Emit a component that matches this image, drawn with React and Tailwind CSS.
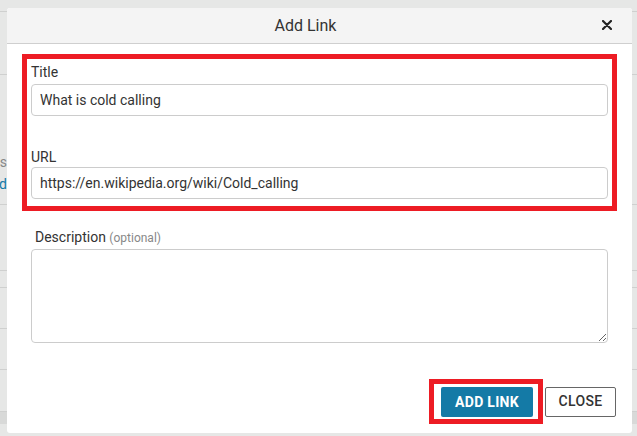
import { useState } from 'react';

const font = { fontFamily: 'Roboto, "Liberation Sans", sans-serif' };

// faint page that sits under the modal
function BackgroundPage() {
  const rows = [
    { h: 'h-[12px]' },
    { h: 'h-[63px]' },
    { h: 'h-[130px]', edge: true },
    { h: 'h-[66px]' },
    { h: 'h-[17px]' },
    { h: 'h-[41px]' },
    { h: 'h-[41px]' },
    { h: 'h-[42px]' },
  ];
  return (
    <div className="absolute inset-0 flex flex-col bg-[#e6e7e6]">
      {rows.map((r, i) => (
        <div key={i} className={`${r.h} border-b border-[#cfd0cf] flex items-start`}>
          {r.edge && (
            <div className="w-[7px] overflow-hidden flex flex-col items-end pt-[76px] text-[14px] leading-[22px]">
              <span className="text-[#888]">s</span>
              <span className="text-[#1479a6]">d</span>
            </div>
          )}
        </div>
      ))}
      <div className="h-[12px] bg-[#d8d9d8]" />
    </div>
  );
}

export default function App() {
  const [title, setTitle] = useState('What is cold calling');
  const [url, setUrl] = useState('https://en.wikipedia.org/wiki/Cold_calling');
  const [desc, setDesc] = useState('');

  return (
    <div className="relative w-[637px] h-[436px] overflow-hidden" style={font}>
      <BackgroundPage />

      {/* Modal */}
      <div className="absolute left-[7px] top-[8px] w-[625px] h-[425px] bg-white rounded-[3px] flex flex-col overflow-hidden">
        <header className="relative h-[36px] shrink-0 bg-[#f4f4f4] border-b border-[#cfcfcf] flex items-center justify-center pr-[28px]">
          <h1 className="text-[16px] text-[#333] leading-none">Add Link</h1>
          <button className="absolute right-[20px] top-[12px] w-[10px] h-[10px] flex items-center justify-center">
            <svg width="10" height="10" viewBox="0 0 10 10">
              <path d="M1 1 L9 9 M9 1 L1 9" stroke="#222" strokeWidth="2.2" strokeLinecap="round" />
            </svg>
          </button>
        </header>

        <div className="flex-1 flex flex-col px-[15px] pt-[10px] pb-[9px]">
          {/* highlighted fields */}
          <div className="border-[5px] border-[#ed1c24] px-[4px] pt-[3px] pb-[7px] flex flex-col">
            <label className="text-[14px] leading-[20px] text-[#333]">Title</label>
            <input
              value={title}
              onChange={e => setTitle(e.target.value)}
              className="mt-[2px] h-[32px] w-full border border-[#cccccc] rounded-[4px] px-2 text-[14px] text-[#333] outline-none"
            />
            <label className="mt-[31px] text-[14px] leading-[20px] text-[#333]">URL</label>
            <input
              value={url}
              onChange={e => setUrl(e.target.value)}
              className="h-[32px] w-full border border-[#cccccc] rounded-[4px] px-2 text-[14px] text-[#333] outline-none"
            />
          </div>

          <div className="px-[9px] pt-[16px] flex flex-col">
            <label className="pl-[4px] text-[14px] leading-[20px] text-[#333]">
              Description <span className="text-[12px] text-[#888]">(optional)</span>
            </label>
            <textarea
              value={desc}
              onChange={e => setDesc(e.target.value)}
              className="mt-[1px] h-[94px] w-full border border-[#cccccc] rounded-[4px] px-2 py-1 text-[14px] text-[#333] outline-none"
            />
          </div>

          <div className="mt-auto flex items-center justify-end gap-[2px] pr-[1px]">
            <div className="border-[5px] border-[#ed1c24] pl-[7px] pr-[5px] pt-[3px] pb-[2px]">
              <button className="w-[92px] h-[30px] bg-[#147aa6] text-white text-[14px] font-bold tracking-[0.3px] rounded-[2px]">
                ADD LINK
              </button>
            </div>
            <button className="w-[71px] h-[30px] bg-white border border-[#666] text-[#333] text-[14px] font-medium tracking-[0.3px] rounded-[2px]">
              CLOSE
            </button>
          </div>
        </div>
      </div>
    </div>
  );
}
